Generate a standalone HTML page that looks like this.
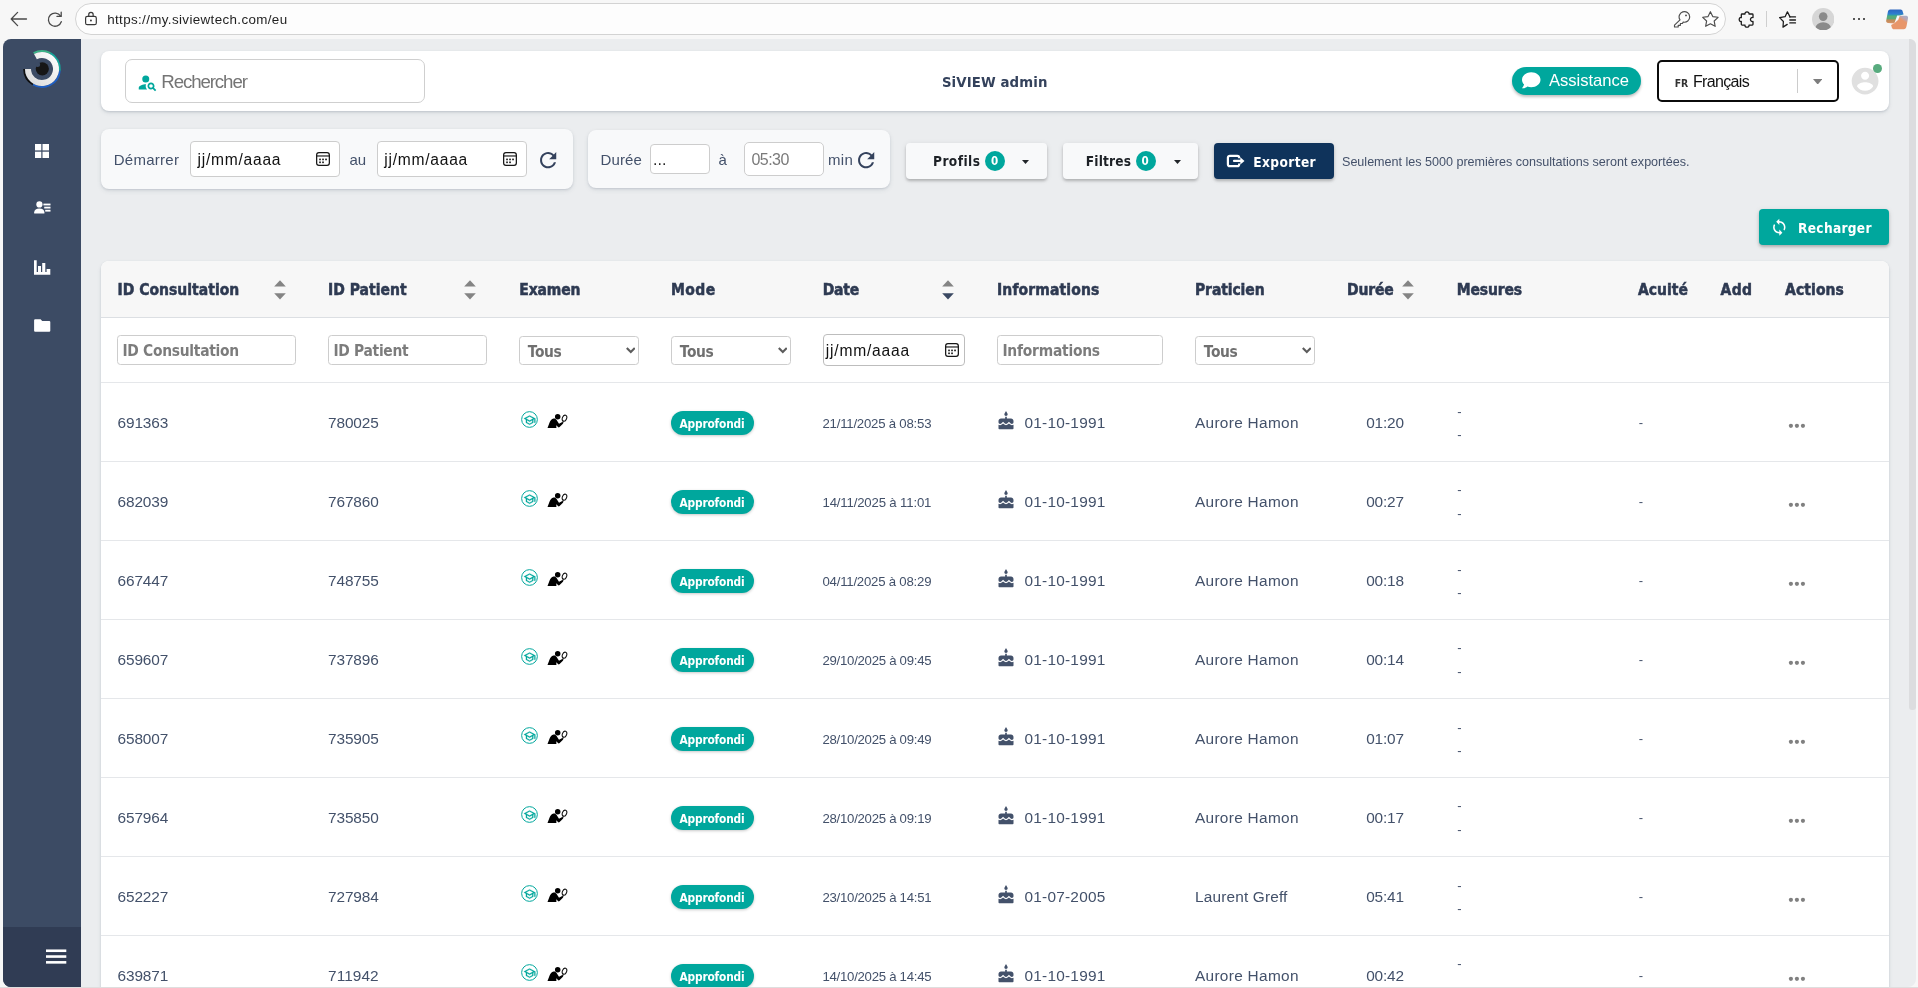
<!DOCTYPE html>
<html lang="fr"><head><meta charset="utf-8"><title>SiVIEW admin</title>
<style>
*{box-sizing:border-box}
html,body{margin:0;padding:0}
body{width:1918px;height:988px;overflow:hidden;background:#f7f7f7;font-family:"Liberation Sans",Arial,sans-serif;position:relative}
.a{position:absolute;display:block}
.t{position:absolute;white-space:pre;line-height:1;display:block}
#chrome{left:0;top:0;width:1918px;height:39px;background:#f7f7f7}
#addr{left:75px;top:3px;width:1651px;height:32px;border-radius:16px;background:#fdfdfd;border:1px solid #d3d3d3}
#vp{left:3px;top:39px;width:1913px;height:948px;border-radius:8px;background:#ebedef;overflow:hidden}
#side{left:3px;top:39px;width:78px;height:948px;background:#3c4b64;border-radius:8px 0 0 8px}
#sidemin{left:3px;top:927px;width:78px;height:60px;background:#303c54;border-radius:0 0 0 8px}
.card{background:#fff;border-radius:8px;box-shadow:0 1px 2px rgba(60,75,100,.18),0 2px 4px rgba(60,75,100,.10)}
.fcard{background:#f8f9fa;border-radius:8px;box-shadow:0 1px 2px rgba(60,75,100,.16),0 2px 5px rgba(60,75,100,.10)}
.inp{background:#fff;border:1px solid #cdcdcd;border-radius:4px}
.btn{border-radius:4px;box-shadow:0 2px 3px rgba(0,0,0,.22),0 1px 6px rgba(0,0,0,.08)}
.hl{height:1px;background:#e5e7ea}
.badge{background:#00a79d;border-radius:12px;box-shadow:0 1px 3px rgba(0,0,0,.22)}
.dot{width:4.2px;height:4.2px;border-radius:50%;background:#7f7f7f}
</style></head><body>
<div id="gl" class="a" style="left:0;top:0;width:1918px;height:988px;will-change:transform">
<div id="vp" class="a"></div><div id="side" class="a"></div><div id="sidemin" class="a"></div><div class="a" style="left:1909px;top:39px;width:6.5px;height:671px;background:#dcdddf;border-radius:0 6px 3px 3px"></div><div id="addr" class="a"></div><svg class="a" style="left:10px;top:11px" width="18" height="16" viewBox="0 0 18 16" ><path d="M1.2 8 H16.500 M7.600 1.400 L1.200 8 L7.600 14.600" fill="none" stroke="#4a4a4a" stroke-width="1.3" stroke-linecap="round" stroke-linejoin="round"/></svg><svg class="a" style="left:46px;top:10.5px" width="18" height="17" viewBox="0 0 18 17" ><path d="M14.6 5.1 A6.6 6.6 0 1 0 15.300 10.700" fill="none" stroke="#4a4a4a" stroke-width="1.3" stroke-linecap="round"/><path d="M15.200 1.200 V5.400 H11" fill="none" stroke="#4a4a4a" stroke-width="1.3" stroke-linecap="round" stroke-linejoin="round"/></svg><svg class="a" style="left:84px;top:10.5px" width="14" height="15" viewBox="0 0 14 15" ><rect x="1.600" y="5.300" width="10.700" height="8.400" rx="1.800" fill="none" stroke="#383838" stroke-width="1.200"/><path d="M4.750 5.200 V3.550 A2.200 2.200 0 0 1 9.150 3.550 V5.200" fill="none" stroke="#383838" stroke-width="1.200"/><circle cx="6.950" cy="9.500" r="0.950" fill="#383838"/></svg><span class="t" style="left:107.20px;top:13.00px;font-size:13.4px;font-weight:400;color:#1f1f1f;letter-spacing:0.362px;">https://my.siviewtech.com/eu</span><svg class="a" style="left:1673px;top:10.5px" width="18" height="17" viewBox="0 0 18 17" ><path d="M10.200 11.100 L9.400 12.500 H7.400 V14.300 H5.200 V16 H1.500 V14.200 L7 8.900 A5.300 5.300 0 1 1 10.200 11.100 Z" fill="none" stroke="#4d4d4d" stroke-width="1.150" stroke-linejoin="round"/><circle cx="13" cy="4.400" r="0.950" fill="#4d4d4d"/></svg><svg class="a" style="left:1701.5px;top:11px" width="17" height="17" viewBox="0 0 17 17" ><path d="M8.40 0.70 L10.75 5.56 L16.10 6.30 L12.20 10.04 L13.16 15.35 L8.40 12.80 L3.64 15.35 L4.60 10.04 L0.70 6.30 L6.05 5.56 Z" fill="none" stroke="#4d4d4d" stroke-width="1.150" stroke-linejoin="round"/></svg><svg class="a" style="left:1738px;top:10.5px" width="17" height="17" viewBox="0 0 17 17" ><path d="M3.300 3.800 Q3.300 3 4.100 3 H7 C6.400 0.200 11.600 0.200 11 3 H14.200 Q15 3 15 3.800 V6.500 C11.600 5.900 11.600 11.100 15 10.500 V13.300 Q15 14.100 14.200 14.100 H11 C11.600 16.900 6.400 16.900 7 14.100 H4.100 Q3.300 14.100 3.300 13.300 V10.500 C0.500 11.100 0.500 5.900 3.300 6.500 Z" fill="none" stroke="#1c1c1c" stroke-width="1.300" stroke-linejoin="round"/></svg><div class="a" style="left:1766px;top:11px;width:1px;height:16px;background:#cfcfcf"></div><svg class="a" style="left:1778.5px;top:10.5px" width="18" height="17" viewBox="0 0 18 17" ><path d="M11 5.900 L8.400 0.800 L6.100 5.700 L0.600 6.600 L4.400 10.500 L4 16.100 L8.200 13.400" fill="none" stroke="#1c1c1c" stroke-width="1.250" stroke-linejoin="round" stroke-linecap="round"/><path d="M10.800 5.900 H16.500 M10.800 9 H16.500 M10.800 11.900 H16.500" stroke="#1c1c1c" stroke-width="1.300" stroke-linecap="round"/></svg><svg class="a" style="left:1811.8px;top:7.8px" width="22.4" height="22.4" viewBox="0 0 22.400 22.400" ><defs><clipPath id="cpa"><circle cx="11.200" cy="11.200" r="11.200"/></clipPath></defs><circle cx="11.200" cy="11.200" r="11.200" fill="#d6d6d6"/><g clip-path="url(#cpa)"><circle cx="11.200" cy="8.600" r="4.300" fill="#8a8a8a"/><ellipse cx="11.200" cy="20.300" rx="7.800" ry="6" fill="#8a8a8a"/></g></svg><div class="a" style="left:1852.7px;top:17.600px;width:2.600px;height:2.600px;border-radius:50%;background:#222"></div><div class="a" style="left:1857.7px;top:17.600px;width:2.600px;height:2.600px;border-radius:50%;background:#222"></div><div class="a" style="left:1862.7px;top:17.600px;width:2.600px;height:2.600px;border-radius:50%;background:#222"></div><svg class="a" style="left:1886px;top:8.5px" width="22.5" height="21" viewBox="0 0 22.500 21" ><defs><linearGradient id="cg1" x1="0" y1="0" x2="0" y2="1"><stop offset="0" stop-color="#2c66c0"/><stop offset="0.330" stop-color="#2f7fd0"/><stop offset="0.400" stop-color="#2fa3a0"/><stop offset="0.500" stop-color="#57aa7c"/><stop offset="0.680" stop-color="#5aaa78"/><stop offset="0.740" stop-color="#c08a5a"/><stop offset="0.900" stop-color="#c99060"/><stop offset="1" stop-color="#e8956a"/></linearGradient><linearGradient id="cg2" x1="0.2" y1="1" x2="1" y2="0"><stop offset="0" stop-color="#e8966a"/><stop offset="0.620" stop-color="#e8966a"/><stop offset="0.780" stop-color="#b9a7b4"/><stop offset="1" stop-color="#a3b2d2"/></linearGradient></defs><path d="M4.200 0.600 H14.600 C15.800 0.600 16.300 1.300 16.700 2.400 L17.600 5.600 L13.500 6.500 L11.200 6.400 L8.300 14.400 L2 14 C0.600 13.900 -0.100 12.800 0.200 11.400 L1.800 3.200 C2.100 1.600 2.900 0.600 4.200 0.600 Z" fill="url(#cg1)"/><path d="M13.700 6.700 H20.200 C21.600 6.700 22.300 7.900 22 9.300 L20.500 17.200 C20.100 19.100 19.200 20.200 17.700 20.200 H8 C6.800 20.200 6.200 19.500 5.800 18.400 L5.100 16.100 L8.400 14.300 L12.300 10.800 Z" fill="url(#cg2)"/></svg><svg class="a" style="left:22px;top:49px" width="40" height="40" viewBox="0 0 40 40" ><defs><linearGradient id="lg" x1="0" y1="1" x2="1" y2="0"><stop offset="0" stop-color="#dcdcdc"/><stop offset="0.55" stop-color="#ececec"/><stop offset="1" stop-color="#ffffff"/></linearGradient></defs><path d="M2.100 20 A17.900 17.900 0 0 0 11 35.500" fill="none" stroke="#101010" stroke-width="1.900"/><path d="M11 35.500 A17.900 17.900 0 0 0 37.830 21.560" fill="none" stroke="#1f5fc4" stroke-width="1.900"/><path d="M37.830 21.560 A17.900 17.900 0 0 0 28.400 4.200" fill="none" stroke="#14a79c" stroke-width="1.900"/><path d="M28.400 4.200 A17.900 17.900 0 0 0 11.600 4.200" fill="none" stroke="#3db488" stroke-width="1.900"/><path d="M6 20 A14 14 0 1 0 13.430 7.640" fill="none" stroke="url(#lg)" stroke-width="6"/><circle cx="20.300" cy="19.800" r="6.600" fill="#161616"/><circle cx="15.600" cy="15.600" r="2.500" fill="#3c4b64"/></svg><svg class="a" style="left:35px;top:144px" width="14" height="14" viewBox="0 0 14 14" ><rect x="0" y="0" width="6.300" height="6.400" fill="#fff"/><rect x="7.500" y="0" width="6.500" height="6.400" fill="#fff"/><rect x="0" y="7.700" width="6.300" height="6.300" fill="#fff"/><rect x="7.500" y="7.700" width="6.500" height="6.300" fill="#fff"/></svg><svg class="a" style="left:33.8px;top:201.3px" width="17" height="13" viewBox="0 0 17 13" ><circle cx="5.400" cy="3.400" r="3.100" fill="#fff"/><path d="M0.200 12.600 V11.300 C0.200 8.600 2.400 7.400 5.400 7.400 C8.400 7.400 10.400 8.600 10.400 11.300 V12.600 Z" fill="#fff"/><rect x="9.400" y="2.600" width="7.100" height="1.800" fill="#fff"/><rect x="10.200" y="5.700" width="6.300" height="1.800" fill="#fff"/><rect x="11.200" y="8.800" width="5.300" height="1.800" fill="#fff"/></svg><svg class="a" style="left:34px;top:259.5px" width="16.5" height="15" viewBox="0 0 16.500 15" ><path d="M0 0.300 H2.700 V12 H0 Z M0 12 H16.300 V14.700 H0 Z M4 6 H7 V12 H4 Z M8.200 3 H11.300 V12 H8.200 Z M12.600 9 H16.300 V12 H12.600 Z" fill="#fff"/></svg><svg class="a" style="left:34px;top:318.6px" width="16.5" height="13" viewBox="0 0 16.500 13" ><path d="M1.200 0.200 H6.600 L8.200 1.900 H15.200 A1.100 1.100 0 0 1 16.300 3 V11.700 A1.100 1.100 0 0 1 15.200 12.800 H1.200 A1.100 1.100 0 0 1 0.100 11.700 V1.300 A1.100 1.100 0 0 1 1.200 0.200 Z" fill="#fff"/></svg><svg class="a" style="left:46px;top:949px" width="21" height="16" viewBox="0 0 21 16" ><rect x="0" y="0.450" width="20.300" height="2.600" fill="#fff"/><rect x="0" y="6.250" width="20.300" height="2.600" fill="#fff"/><rect x="0" y="12.050" width="20.300" height="2.600" fill="#fff"/></svg><div class="a card" style="left:101px;top:51px;width:1788px;height:60px"></div><div class="a inp" style="left:125px;top:59px;width:300px;height:44px;border-radius:7px;border-color:#cfcfcf"></div><svg class="a" style="left:136.6px;top:71.5px" width="21" height="21" viewBox="0 0 24 24" ><path d="M10 4a4 4 0 1 0 0 8 4 4 0 0 0 0-8zM10.35 14.01C7.62 13.91 2 15.27 2 18v2h9.54c-2.47-2.76-1.23-5.89-1.19-5.99zM19.43 18.02c.36-.59.57-1.28.57-2.02 0-2.21-1.79-4-4-4s-4 1.79-4 4 1.790 4 4 4c.74 0 1.43-.22 2.02-.57L20.59 22 22 20.59l-2.57-2.57zM16 18c-1.1 0-2-.9-2-2s.9-2 2-2 2 .9 2 2-.9 2-2 2z" fill="#00a79d"/></svg><span class="t" style="left:161.30px;top:73.00px;font-size:18.7px;font-weight:400;color:#757575;letter-spacing:-1.111px;">Rechercher</span><span class="t" style="left:941.90px;top:75.00px;font-size:14.8px;font-weight:700;color:#34425c;font-family:'DejaVu Sans Condensed','DejaVu Sans',sans-serif;letter-spacing:0.112px;">SiVIEW admin</span><div class="a" style="left:1512px;top:67px;width:128.5px;height:27.5px;border-radius:14px;background:#00a79d;box-shadow:0 2px 3px rgba(0,0,0,.25)"></div><svg class="a" style="left:1522px;top:70.5px" width="18.5" height="18.5" viewBox="0 0 512 512" ><path d="M256 32C114.6 32 0 125.1 0 240c0 49.6 21.4 95 57 130.7C44.5 421.1 2.7 466 2.2 466.500c-2.2 2.3-2.8 5.7-1.5 8.7S4.8 480 8 480c66.3 0 116-31.8 140.6-51.4 32.7 12.3 69 19.4 107.4 19.4 141.4 0 256-93.1 256-208S397.4 32 256 32z" fill="#fff"/></svg><span class="t" style="left:1549.00px;top:73.00px;font-size:16.6px;font-weight:400;color:#fff;letter-spacing:-0.025px;">Assistance</span><div class="a" style="left:1657px;top:60px;width:182px;height:42px;border:2px solid #0b0b0b;border-radius:5px;background:#fff"></div><span class="t" style="left:1674.70px;top:78.00px;font-size:10.4px;font-weight:700;color:#333;font-family:'DejaVu Sans Condensed','DejaVu Sans',sans-serif;letter-spacing:-0.097px;">FR</span><span class="t" style="left:1693.00px;top:74.00px;font-size:16px;font-weight:400;color:#111;letter-spacing:-0.670px;">Français</span><div class="a" style="left:1797px;top:69px;width:1px;height:24px;background:#cccccc"></div><svg class="a" style="left:1812.8px;top:78.8px" width="9.4" height="5.6" viewBox="0 0 9.4 5.6" ><path d="M0 0 L9.4 0 L4.7 5.6 Z" fill="#7d7d7d"/></svg><svg class="a" style="left:1849px;top:64.8px" width="32.2" height="32.2" viewBox="0 0 24 24" ><path d="M12 2C6.48 2 2 6.48 2 12s4.48 10 10 10 10-4.48 10-10S17.52 2 12 2zm0 3c1.66 0 3 1.34 3 3s-1.34 3-3 3-3-1.34-3-3 1.34-3 3-3zm0 14.2c-2.5 0-4.71-1.28-6-3.22.03-1.99 4-3.08 6-3.08 1.990 0 5.97 1.09 6 3.08-1.29 1.94-3.5 3.22-6 3.220z" fill="#e0e0e0"/></svg><div class="a" style="left:1872.800px;top:64px;width:9.200px;height:9.200px;border-radius:50%;background:#58ab7e"></div><div class="a fcard" style="left:101px;top:129px;width:472px;height:60px"></div><span class="t" style="left:113.75px;top:152.00px;font-size:15px;font-weight:400;color:#43516a;letter-spacing:0.270px;">Démarrer</span><div class="a inp" style="left:190px;top:141px;width:150px;height:36px"></div><span class="t" style="left:197.50px;top:152.00px;font-size:15.6px;font-weight:400;color:#111;letter-spacing:0.748px;">jj/mm/aaaa</span><svg class="a" style="left:315.75px;top:151.75px" width="14" height="14" viewBox="0 0 14 14" ><rect x="0.650" y="0.650" width="12.700" height="12.700" rx="2.300" fill="none" stroke="#161616" stroke-width="1.250"/><rect x="0.650" y="3.400" width="12.700" height="1.150" fill="#161616"/><rect x="3.200" y="6.600" width="1.650" height="1.650" fill="#161616"/><rect x="6.200" y="6.600" width="1.650" height="1.650" fill="#161616"/><rect x="9.200" y="6.600" width="1.650" height="1.650" fill="#161616"/><rect x="3.200" y="9.500" width="1.650" height="1.650" fill="#161616"/><rect x="6.200" y="9.500" width="1.650" height="1.650" fill="#161616"/></svg><span class="t" style="left:349.50px;top:152.00px;font-size:15px;font-weight:400;color:#43516a;letter-spacing:-0.094px;">au</span><div class="a inp" style="left:377px;top:141px;width:150px;height:36px"></div><span class="t" style="left:384.30px;top:152.00px;font-size:15.6px;font-weight:400;color:#111;letter-spacing:0.748px;">jj/mm/aaaa</span><svg class="a" style="left:502.6px;top:151.75px" width="14" height="14" viewBox="0 0 14 14" ><rect x="0.650" y="0.650" width="12.700" height="12.700" rx="2.300" fill="none" stroke="#161616" stroke-width="1.250"/><rect x="0.650" y="3.400" width="12.700" height="1.150" fill="#161616"/><rect x="3.200" y="6.600" width="1.650" height="1.650" fill="#161616"/><rect x="6.200" y="6.600" width="1.650" height="1.650" fill="#161616"/><rect x="9.200" y="6.600" width="1.650" height="1.650" fill="#161616"/><rect x="3.200" y="9.500" width="1.650" height="1.650" fill="#161616"/><rect x="6.200" y="9.500" width="1.650" height="1.650" fill="#161616"/></svg><svg class="a" style="left:536.4px;top:147.6px" width="24.3" height="24.3" viewBox="0 0 24 24" ><path d="M17.65 6.35C16.2 4.9 14.21 4 12 4c-4.42 0-7.99 3.58-7.99 8s3.57 8 7.99 8c3.73 0 6.84-2.55 7.730-6h-2.080c-.82 2.33-3.040 4-5.650 4-3.310 0-6-2.690-6-6s2.690-6 6-6c1.660 0 3.140.69 4.220 1.780L13 11h7V4l-2.350 2.350z" fill="#34425c"/></svg><div class="a fcard" style="left:588px;top:130px;width:302px;height:58px"></div><span class="t" style="left:600.50px;top:152.00px;font-size:15px;font-weight:400;color:#43516a;letter-spacing:0.128px;">Durée</span><div class="a inp" style="left:650px;top:144px;width:60px;height:30px"></div><span class="t" style="left:653.00px;top:152.00px;font-size:16px;font-weight:400;color:#222;">...</span><span class="t" style="left:718.50px;top:152.00px;font-size:15px;font-weight:400;color:#43516a;">à</span><div class="a inp" style="left:744px;top:142px;width:80px;height:34px;border-radius:5px"></div><span class="t" style="left:751.50px;top:152.00px;font-size:16px;font-weight:400;color:#7a7a7a;letter-spacing:-0.559px;">05:30</span><span class="t" style="left:828.00px;top:152.00px;font-size:15px;font-weight:400;color:#43516a;letter-spacing:0.359px;">min</span><svg class="a" style="left:854.2px;top:147.9px" width="24.3" height="24.3" viewBox="0 0 24 24" ><path d="M17.65 6.35C16.2 4.9 14.21 4 12 4c-4.42 0-7.99 3.58-7.99 8s3.57 8 7.99 8c3.73 0 6.84-2.55 7.730-6h-2.080c-.82 2.33-3.040 4-5.650 4-3.310 0-6-2.690-6-6s2.690-6 6-6c1.660 0 3.140.69 4.220 1.780L13 11h7V4l-2.350 2.350z" fill="#34425c"/></svg><div class="a btn" style="left:906px;top:143px;width:141px;height:36px;background:#f8f9fa"></div><span class="t" style="left:933.00px;top:155.00px;font-size:13.6px;font-weight:700;color:#1d2126;font-family:'DejaVu Sans Condensed','DejaVu Sans',sans-serif;letter-spacing:0.438px;">Profils</span><div class="a" style="left:985px;top:151px;width:20px;height:20px;border-radius:50%;background:#00a79d"></div><span class="t" style="left:991.10px;top:156.00px;font-size:11.5px;font-weight:700;color:#fff;font-family:'DejaVu Sans Condensed','DejaVu Sans',sans-serif;">0</span><svg class="a" style="left:1022.3px;top:159.5px" width="7" height="4" viewBox="0 0 7 4" ><path d="M0 0 L7 0 L3.5 4 Z" fill="#212529"/></svg><div class="a btn" style="left:1063px;top:143px;width:135px;height:36px;background:#f8f9fa"></div><span class="t" style="left:1085.75px;top:155.00px;font-size:13.6px;font-weight:700;color:#1d2126;font-family:'DejaVu Sans Condensed','DejaVu Sans',sans-serif;letter-spacing:0.185px;">Filtres</span><div class="a" style="left:1135.500px;top:151px;width:20px;height:20px;border-radius:50%;background:#00a79d"></div><span class="t" style="left:1141.60px;top:156.00px;font-size:11.5px;font-weight:700;color:#fff;font-family:'DejaVu Sans Condensed','DejaVu Sans',sans-serif;">0</span><svg class="a" style="left:1173.75px;top:159.5px" width="7" height="4" viewBox="0 0 7 4" ><path d="M0 0 L7 0 L3.5 4 Z" fill="#212529"/></svg><div class="a btn" style="left:1214px;top:143px;width:120px;height:36px;background:#0f335b"></div><svg class="a" style="left:1225.5px;top:154.3px" width="19" height="14" viewBox="0 0 19 14" ><path d="M13.2 4.3 V3.8 A2 2 0 0 0 11.2 1.800 H3.900 A2 2 0 0 0 1.900 3.800 V10.200 A2 2 0 0 0 3.900 12.200 H11.200 A2 2 0 0 0 13.200 10.200 V9.600" fill="none" stroke="#fff" stroke-width="2.200"/><path d="M8 6.950 H15" stroke="#fff" stroke-width="2.200" stroke-linecap="round"/><path d="M14.300 3.300 L18.500 6.950 L14.300 10.600 Z" fill="#fff"/></svg><span class="t" style="left:1253.25px;top:156.00px;font-size:13.6px;font-weight:700;color:#fff;font-family:'DejaVu Sans Condensed','DejaVu Sans',sans-serif;letter-spacing:0.391px;">Exporter</span><span class="t" style="left:1342.00px;top:156.00px;font-size:12.6px;font-weight:400;color:#44516a;letter-spacing:-0.019px;">Seulement les 5000 premières consultations seront exportées.</span><div class="a btn" style="left:1759px;top:209px;width:130px;height:36px;background:#00a79d"></div><svg class="a" style="left:1770.1px;top:218px" width="18.6" height="18.6" viewBox="0 0 24 24" ><path d="M12 4V1L8 5l4 4V6c3.31 0 6 2.69 6 6 0 1.01-.25 1.97-.7 2.8l1.46 1.46C19.54 15.03 20 13.57 20 12c0-4.42-3.58-8-8-8zm0 14c-3.31 0-6-2.69-6-6 0-1.010.25-1.97.7-2.8L5.24 7.74C4.46 8.97 4 10.43 4 12c0 4.42 3.58 8 8 8v3l4-4-4-4v3z" fill="#fff"/></svg><span class="t" style="left:1798.00px;top:222.00px;font-size:13.6px;font-weight:700;color:#fff;font-family:'DejaVu Sans Condensed','DejaVu Sans',sans-serif;letter-spacing:0.306px;">Recharger</span><div class="a card" style="left:101px;top:261px;width:1788px;height:760px;overflow:hidden"><div class="a" style="left:0;top:0;width:1788px;height:56.500px;background:#f7f7f7"></div></div><div class="a hl" style="left:101px;top:317px;width:1788px;background:#dcdfe3"></div><div class="a hl" style="left:101px;top:382px;width:1788px"></div><span class="t" style="left:117.50px;top:283.00px;font-size:15.5px;font-weight:700;color:#2e3a52;font-family:'DejaVu Sans Condensed','DejaVu Sans',sans-serif;letter-spacing:0.023px;-webkit-text-stroke:0.5px #2e3a52;">ID Consultation</span><span class="t" style="left:328.00px;top:283.00px;font-size:15.5px;font-weight:700;color:#2e3a52;font-family:'DejaVu Sans Condensed','DejaVu Sans',sans-serif;letter-spacing:0.042px;-webkit-text-stroke:0.5px #2e3a52;">ID Patient</span><span class="t" style="left:519.25px;top:283.00px;font-size:15.5px;font-weight:700;color:#2e3a52;font-family:'DejaVu Sans Condensed','DejaVu Sans',sans-serif;letter-spacing:-0.143px;-webkit-text-stroke:0.5px #2e3a52;">Examen</span><span class="t" style="left:671.00px;top:283.00px;font-size:15.5px;font-weight:700;color:#2e3a52;font-family:'DejaVu Sans Condensed','DejaVu Sans',sans-serif;letter-spacing:0.398px;-webkit-text-stroke:0.5px #2e3a52;">Mode</span><span class="t" style="left:822.75px;top:283.00px;font-size:15.5px;font-weight:700;color:#2e3a52;font-family:'DejaVu Sans Condensed','DejaVu Sans',sans-serif;letter-spacing:-0.219px;-webkit-text-stroke:0.5px #2e3a52;">Date</span><span class="t" style="left:997.00px;top:283.00px;font-size:15.5px;font-weight:700;color:#2e3a52;font-family:'DejaVu Sans Condensed','DejaVu Sans',sans-serif;letter-spacing:0.138px;-webkit-text-stroke:0.5px #2e3a52;">Informations</span><span class="t" style="left:1195.00px;top:283.00px;font-size:15.5px;font-weight:700;color:#2e3a52;font-family:'DejaVu Sans Condensed','DejaVu Sans',sans-serif;letter-spacing:-0.099px;-webkit-text-stroke:0.5px #2e3a52;">Praticien</span><span class="t" style="left:1347.00px;top:283.00px;font-size:15.5px;font-weight:700;color:#2e3a52;font-family:'DejaVu Sans Condensed','DejaVu Sans',sans-serif;letter-spacing:-0.163px;-webkit-text-stroke:0.5px #2e3a52;">Durée</span><span class="t" style="left:1456.75px;top:283.00px;font-size:15.5px;font-weight:700;color:#2e3a52;font-family:'DejaVu Sans Condensed','DejaVu Sans',sans-serif;letter-spacing:-0.138px;-webkit-text-stroke:0.5px #2e3a52;">Mesures</span><span class="t" style="left:1638.00px;top:283.00px;font-size:15.5px;font-weight:700;color:#2e3a52;font-family:'DejaVu Sans Condensed','DejaVu Sans',sans-serif;letter-spacing:0.018px;-webkit-text-stroke:0.5px #2e3a52;">Acuité</span><span class="t" style="left:1720.50px;top:283.00px;font-size:15.5px;font-weight:700;color:#2e3a52;font-family:'DejaVu Sans Condensed','DejaVu Sans',sans-serif;letter-spacing:0.411px;-webkit-text-stroke:0.5px #2e3a52;">Add</span><span class="t" style="left:1785.00px;top:283.00px;font-size:15.5px;font-weight:700;color:#2e3a52;font-family:'DejaVu Sans Condensed','DejaVu Sans',sans-serif;letter-spacing:0.096px;-webkit-text-stroke:0.5px #2e3a52;">Actions</span><svg class="a" style="left:274px;top:279.5px" width="12" height="21" viewBox="0 0 12 21"><path d="M0.2 6.600 L6 0.200 L11.800 6.600 Z" fill="#848484"/><path d="M0.200 13.300 L6 19.600 L11.800 13.300 Z" fill="#848484"/></svg><svg class="a" style="left:464px;top:279.5px" width="12" height="21" viewBox="0 0 12 21"><path d="M0.2 6.600 L6 0.200 L11.800 6.600 Z" fill="#848484"/><path d="M0.200 13.300 L6 19.600 L11.800 13.300 Z" fill="#848484"/></svg><svg class="a" style="left:942.4px;top:279.5px" width="12" height="21" viewBox="0 0 12 21"><path d="M0.2 6.600 L6 0.200 L11.800 6.600 Z" fill="#848484"/><path d="M0.200 13.300 L6 19.600 L11.800 13.300 Z" fill="#3a4862"/></svg><svg class="a" style="left:1401.6px;top:279.5px" width="12" height="21" viewBox="0 0 12 21"><path d="M0.2 6.600 L6 0.200 L11.800 6.600 Z" fill="#848484"/><path d="M0.200 13.300 L6 19.600 L11.800 13.300 Z" fill="#848484"/></svg><div class="a inp" style="left:117px;top:335px;width:179px;height:30px;border-color:#cdcdcd;border-radius:3.5px"></div><span class="t" style="left:122.40px;top:344.00px;font-size:15.4px;font-weight:700;color:#7c7c7c;font-family:'DejaVu Sans Condensed','DejaVu Sans',sans-serif;letter-spacing:-0.270px;">ID Consultation</span><div class="a inp" style="left:328px;top:335px;width:159px;height:30px;border-color:#cdcdcd;border-radius:3.5px"></div><span class="t" style="left:333.40px;top:344.00px;font-size:15.4px;font-weight:700;color:#7c7c7c;font-family:'DejaVu Sans Condensed','DejaVu Sans',sans-serif;letter-spacing:-0.278px;">ID Patient</span><div class="a inp" style="left:519px;top:336px;width:120px;height:29px;border-color:#cdcdcd;border-radius:3.5px"></div><span class="t" style="left:527.80px;top:345.00px;font-size:15.4px;font-weight:700;color:#707070;font-family:'DejaVu Sans Condensed','DejaVu Sans',sans-serif;letter-spacing:-0.320px;">Tous</span><svg class="a" style="left:625.5999999999999px;top:346.6px" width="9.6" height="7" viewBox="0 0 9.6 7" ><path d="M0.800 1 L4.800 5.100 L8.800 1" fill="none" stroke="#5c5c5c" stroke-width="2.100"/></svg><div class="a inp" style="left:671px;top:336px;width:120px;height:29px;border-color:#cdcdcd;border-radius:3.5px"></div><span class="t" style="left:679.80px;top:345.00px;font-size:15.4px;font-weight:700;color:#707070;font-family:'DejaVu Sans Condensed','DejaVu Sans',sans-serif;letter-spacing:-0.320px;">Tous</span><svg class="a" style="left:777.5999999999999px;top:346.6px" width="9.6" height="7" viewBox="0 0 9.6 7" ><path d="M0.800 1 L4.800 5.100 L8.800 1" fill="none" stroke="#5c5c5c" stroke-width="2.100"/></svg><div class="a inp" style="left:823px;top:334px;width:142px;height:32px;border-color:#bdbdbd"></div><span class="t" style="left:825.75px;top:343.00px;font-size:15.6px;font-weight:400;color:#111;letter-spacing:0.798px;">jj/mm/aaaa</span><svg class="a" style="left:944.5px;top:343px" width="14" height="14" viewBox="0 0 14 14" ><rect x="0.650" y="0.650" width="12.700" height="12.700" rx="2.300" fill="none" stroke="#161616" stroke-width="1.250"/><rect x="0.650" y="3.400" width="12.700" height="1.150" fill="#161616"/><rect x="3.200" y="6.600" width="1.650" height="1.650" fill="#161616"/><rect x="6.200" y="6.600" width="1.650" height="1.650" fill="#161616"/><rect x="9.200" y="6.600" width="1.650" height="1.650" fill="#161616"/><rect x="3.200" y="9.500" width="1.650" height="1.650" fill="#161616"/><rect x="6.200" y="9.500" width="1.650" height="1.650" fill="#161616"/></svg><div class="a inp" style="left:997px;top:335px;width:166px;height:30px;border-color:#cdcdcd;border-radius:3.5px"></div><span class="t" style="left:1002.40px;top:344.00px;font-size:15.4px;font-weight:700;color:#7c7c7c;font-family:'DejaVu Sans Condensed','DejaVu Sans',sans-serif;letter-spacing:-0.219px;">Informations</span><div class="a inp" style="left:1195px;top:336px;width:120px;height:29px;border-color:#cdcdcd;border-radius:3.5px"></div><span class="t" style="left:1203.80px;top:345.00px;font-size:15.4px;font-weight:700;color:#707070;font-family:'DejaVu Sans Condensed','DejaVu Sans',sans-serif;letter-spacing:-0.320px;">Tous</span><svg class="a" style="left:1301.6px;top:346.6px" width="9.6" height="7" viewBox="0 0 9.6 7" ><path d="M0.800 1 L4.800 5.100 L8.800 1" fill="none" stroke="#5c5c5c" stroke-width="2.100"/></svg><span class="t" style="left:117.50px;top:415.00px;font-size:15.4px;font-weight:400;color:#43516a;letter-spacing:-0.102px;">691363</span><span class="t" style="left:328.00px;top:415.00px;font-size:15.4px;font-weight:400;color:#43516a;letter-spacing:-0.102px;">780025</span><svg class="a" style="left:520.7px;top:410.5px" width="17" height="17" viewBox="0 0 34 34" ><circle cx="17" cy="17" r="15.700" fill="none" stroke="#00a79d" stroke-width="2"/><g transform="translate(4.600,5.600) scale(1.05)"><path d="M12 3L1 9l4 2.180v6L12 21l7-3.820v-6l2-1.090V17h2V9L12 3zm6.820 6L12 12.720 5.180 9 12 5.280 18.820 9zM17 15.990l-5 2.730-5-2.730v-3.720L12 15l5-2.730v3.720z" fill="#00a79d" stroke="#00a79d" stroke-width="0.450"/></g></svg><svg class="a" style="left:546.5px;top:413.2px" width="21" height="15.5" viewBox="0 0 21 15.5" ><circle cx="10.7" cy="3.7" r="2.75" fill="#000"/><path d="M0.5 14.9 L2.2 10.5 C3.2 7.8 4.6 5.9 6.6 5.6 C8 5.4 8.9 6 9.6 7.1 L12 10.7 L15.3 9 L16.2 10.5 L12.6 14.1 C12 14.6 11.400 14.5 11 14.1 L9.3 12.3 L9.4 14.9 Z" fill="#000"/><ellipse cx="17.5" cy="5.2" rx="2.1" ry="3.1" transform="rotate(22 17.5 5.2)" fill="#fff" stroke="#111" stroke-width="1.1"/><path d="M16.3 8.2 L15.4 10.2" stroke="#111" stroke-width="1.2"/></svg><div class="a badge" style="left:671px;top:411px;width:82.500px;height:23.500px"></div><span class="t" style="left:679.50px;top:419.00px;font-size:11.8px;font-weight:700;color:#fff;font-family:'DejaVu Sans Condensed','DejaVu Sans',sans-serif;letter-spacing:-0.164px;">Approfondi</span><span class="t" style="left:822.50px;top:417.00px;font-size:13.2px;font-weight:400;color:#43516a;letter-spacing:-0.219px;">21/11/2025 à 08:53</span><svg class="a" style="left:996.3px;top:411.2px" width="20" height="20" viewBox="0 0 24 24" ><path d="M12 6c1.11 0 2-.9 2-2 0-.38-.1-.73-.29-1.030L12 0l-1.710 2.970c-.19.3-.29.65-.29 1.030 0 1.1.9 2 2 2zm4.600 9.990l-1.070-1.070-1.080 1.070c-1.300 1.300-3.580 1.310-4.890 0l-1.070-1.070-1.090 1.070C6.750 16.640 5.880 17 4.960 17c-.73 0-1.400-.23-1.960-.61V21c0 .55.45 1 1 1h16c.55 0 1-.45 1-1v-4.610c-.56.38-1.230.61-1.960.61-.92 0-1.790-.36-2.440-1.010zM18 9h-5V7h-2v2H6c-1.660 0-3 1.340-3 3v1.540c0 1.080.88 1.960 1.960 1.960.52 0 1.020-.2 1.380-.57l2.140-2.130 2.130 2.130c.74.74 2.030.74 2.770 0l2.140-2.130 2.130 2.130c.37.37.86.57 1.380.57 1.080 0 1.960-.88 1.960-1.960V12C21 10.340 19.660 9 18 9z" fill="#43516a"/></svg><span class="t" style="left:1024.50px;top:415.00px;font-size:15.4px;font-weight:400;color:#43516a;letter-spacing:0.227px;">01-10-1991</span><span class="t" style="left:1195.00px;top:415.00px;font-size:15.4px;font-weight:400;color:#43516a;letter-spacing:0.305px;">Aurore Hamon</span><span class="t" style="left:1366.25px;top:415.00px;font-size:15.4px;font-weight:400;color:#43516a;letter-spacing:-0.203px;">01:20</span><span class="t" style="left:1457.25px;top:405.00px;font-size:13px;font-weight:400;color:#43516a;">-</span><span class="t" style="left:1457.25px;top:428.00px;font-size:13px;font-weight:400;color:#43516a;">-</span><span class="t" style="left:1638.75px;top:416.00px;font-size:13px;font-weight:400;color:#43516a;">-</span><svg class="a" style="left:1788px;top:423px" width="18" height="6" viewBox="0 0 18 6" ><circle cx="2.9" cy="2.85" r="2.1" fill="#808080"/><circle cx="8.9" cy="2.85" r="2.1" fill="#808080"/><circle cx="14.95" cy="2.85" r="2.1" fill="#808080"/></svg><div class="a hl" style="left:101px;top:461px;width:1788px"></div><span class="t" style="left:117.50px;top:494.00px;font-size:15.4px;font-weight:400;color:#43516a;letter-spacing:-0.102px;">682039</span><span class="t" style="left:328.00px;top:494.00px;font-size:15.4px;font-weight:400;color:#43516a;letter-spacing:-0.102px;">767860</span><svg class="a" style="left:520.7px;top:489.5px" width="17" height="17" viewBox="0 0 34 34" ><circle cx="17" cy="17" r="15.700" fill="none" stroke="#00a79d" stroke-width="2"/><g transform="translate(4.600,5.600) scale(1.05)"><path d="M12 3L1 9l4 2.180v6L12 21l7-3.820v-6l2-1.090V17h2V9L12 3zm6.820 6L12 12.720 5.180 9 12 5.280 18.820 9zM17 15.990l-5 2.730-5-2.730v-3.720L12 15l5-2.730v3.720z" fill="#00a79d" stroke="#00a79d" stroke-width="0.450"/></g></svg><svg class="a" style="left:546.5px;top:492.2px" width="21" height="15.5" viewBox="0 0 21 15.5" ><circle cx="10.7" cy="3.7" r="2.75" fill="#000"/><path d="M0.5 14.9 L2.2 10.5 C3.2 7.8 4.6 5.9 6.6 5.6 C8 5.4 8.9 6 9.6 7.1 L12 10.7 L15.3 9 L16.2 10.5 L12.6 14.1 C12 14.6 11.400 14.5 11 14.1 L9.3 12.3 L9.4 14.9 Z" fill="#000"/><ellipse cx="17.5" cy="5.2" rx="2.1" ry="3.1" transform="rotate(22 17.5 5.2)" fill="#fff" stroke="#111" stroke-width="1.1"/><path d="M16.3 8.2 L15.4 10.2" stroke="#111" stroke-width="1.2"/></svg><div class="a badge" style="left:671px;top:490px;width:82.500px;height:23.500px"></div><span class="t" style="left:679.50px;top:498.00px;font-size:11.8px;font-weight:700;color:#fff;font-family:'DejaVu Sans Condensed','DejaVu Sans',sans-serif;letter-spacing:-0.164px;">Approfondi</span><span class="t" style="left:822.50px;top:496.00px;font-size:13.2px;font-weight:400;color:#43516a;letter-spacing:-0.165px;">14/11/2025 à 11:01</span><svg class="a" style="left:996.3px;top:490.2px" width="20" height="20" viewBox="0 0 24 24" ><path d="M12 6c1.11 0 2-.9 2-2 0-.38-.1-.73-.29-1.030L12 0l-1.710 2.970c-.19.3-.29.65-.29 1.030 0 1.1.9 2 2 2zm4.600 9.990l-1.070-1.070-1.080 1.070c-1.300 1.300-3.580 1.310-4.890 0l-1.070-1.070-1.090 1.070C6.750 16.640 5.880 17 4.960 17c-.73 0-1.400-.23-1.960-.61V21c0 .55.45 1 1 1h16c.55 0 1-.45 1-1v-4.610c-.56.38-1.230.61-1.960.61-.92 0-1.790-.36-2.440-1.010zM18 9h-5V7h-2v2H6c-1.660 0-3 1.340-3 3v1.540c0 1.080.88 1.960 1.960 1.960.52 0 1.020-.2 1.380-.57l2.140-2.130 2.130 2.130c.74.74 2.030.74 2.770 0l2.140-2.130 2.130 2.130c.37.37.86.57 1.380.57 1.080 0 1.960-.88 1.960-1.960V12C21 10.340 19.660 9 18 9z" fill="#43516a"/></svg><span class="t" style="left:1024.50px;top:494.00px;font-size:15.4px;font-weight:400;color:#43516a;letter-spacing:0.227px;">01-10-1991</span><span class="t" style="left:1195.00px;top:494.00px;font-size:15.4px;font-weight:400;color:#43516a;letter-spacing:0.305px;">Aurore Hamon</span><span class="t" style="left:1366.25px;top:494.00px;font-size:15.4px;font-weight:400;color:#43516a;letter-spacing:-0.203px;">00:27</span><span class="t" style="left:1457.25px;top:483.00px;font-size:13px;font-weight:400;color:#43516a;">-</span><span class="t" style="left:1457.25px;top:507.00px;font-size:13px;font-weight:400;color:#43516a;">-</span><span class="t" style="left:1638.75px;top:495.00px;font-size:13px;font-weight:400;color:#43516a;">-</span><svg class="a" style="left:1788px;top:502px" width="18" height="6" viewBox="0 0 18 6" ><circle cx="2.9" cy="2.85" r="2.1" fill="#808080"/><circle cx="8.9" cy="2.85" r="2.1" fill="#808080"/><circle cx="14.95" cy="2.85" r="2.1" fill="#808080"/></svg><div class="a hl" style="left:101px;top:540px;width:1788px"></div><span class="t" style="left:117.50px;top:573.00px;font-size:15.4px;font-weight:400;color:#43516a;letter-spacing:-0.102px;">667447</span><span class="t" style="left:328.00px;top:573.00px;font-size:15.4px;font-weight:400;color:#43516a;letter-spacing:-0.102px;">748755</span><svg class="a" style="left:520.7px;top:568.5px" width="17" height="17" viewBox="0 0 34 34" ><circle cx="17" cy="17" r="15.700" fill="none" stroke="#00a79d" stroke-width="2"/><g transform="translate(4.600,5.600) scale(1.05)"><path d="M12 3L1 9l4 2.180v6L12 21l7-3.820v-6l2-1.090V17h2V9L12 3zm6.820 6L12 12.720 5.180 9 12 5.280 18.820 9zM17 15.990l-5 2.730-5-2.730v-3.720L12 15l5-2.730v3.720z" fill="#00a79d" stroke="#00a79d" stroke-width="0.450"/></g></svg><svg class="a" style="left:546.5px;top:571.2px" width="21" height="15.5" viewBox="0 0 21 15.5" ><circle cx="10.7" cy="3.7" r="2.75" fill="#000"/><path d="M0.5 14.9 L2.2 10.5 C3.2 7.8 4.6 5.9 6.6 5.6 C8 5.4 8.9 6 9.6 7.1 L12 10.7 L15.3 9 L16.2 10.5 L12.6 14.1 C12 14.6 11.400 14.5 11 14.1 L9.3 12.3 L9.4 14.9 Z" fill="#000"/><ellipse cx="17.5" cy="5.2" rx="2.1" ry="3.1" transform="rotate(22 17.5 5.2)" fill="#fff" stroke="#111" stroke-width="1.1"/><path d="M16.3 8.2 L15.4 10.2" stroke="#111" stroke-width="1.2"/></svg><div class="a badge" style="left:671px;top:569px;width:82.500px;height:23.500px"></div><span class="t" style="left:679.50px;top:577.00px;font-size:11.8px;font-weight:700;color:#fff;font-family:'DejaVu Sans Condensed','DejaVu Sans',sans-serif;letter-spacing:-0.164px;">Approfondi</span><span class="t" style="left:822.50px;top:575.00px;font-size:13.2px;font-weight:400;color:#43516a;letter-spacing:-0.219px;">04/11/2025 à 08:29</span><svg class="a" style="left:996.3px;top:569.2px" width="20" height="20" viewBox="0 0 24 24" ><path d="M12 6c1.11 0 2-.9 2-2 0-.38-.1-.73-.29-1.030L12 0l-1.710 2.970c-.19.3-.29.65-.29 1.030 0 1.1.9 2 2 2zm4.600 9.990l-1.070-1.070-1.080 1.070c-1.300 1.300-3.580 1.310-4.890 0l-1.070-1.070-1.090 1.070C6.750 16.640 5.880 17 4.960 17c-.73 0-1.400-.23-1.960-.61V21c0 .55.45 1 1 1h16c.55 0 1-.45 1-1v-4.610c-.56.38-1.230.61-1.960.61-.92 0-1.790-.36-2.440-1.010zM18 9h-5V7h-2v2H6c-1.660 0-3 1.340-3 3v1.540c0 1.080.88 1.960 1.960 1.960.52 0 1.020-.2 1.380-.57l2.140-2.130 2.130 2.130c.74.74 2.030.74 2.770 0l2.140-2.130 2.130 2.130c.37.37.86.57 1.380.57 1.080 0 1.960-.88 1.960-1.960V12C21 10.340 19.660 9 18 9z" fill="#43516a"/></svg><span class="t" style="left:1024.50px;top:573.00px;font-size:15.4px;font-weight:400;color:#43516a;letter-spacing:0.227px;">01-10-1991</span><span class="t" style="left:1195.00px;top:573.00px;font-size:15.4px;font-weight:400;color:#43516a;letter-spacing:0.305px;">Aurore Hamon</span><span class="t" style="left:1366.25px;top:573.00px;font-size:15.4px;font-weight:400;color:#43516a;letter-spacing:-0.203px;">00:18</span><span class="t" style="left:1457.25px;top:563.00px;font-size:13px;font-weight:400;color:#43516a;">-</span><span class="t" style="left:1457.25px;top:586.00px;font-size:13px;font-weight:400;color:#43516a;">-</span><span class="t" style="left:1638.75px;top:574.00px;font-size:13px;font-weight:400;color:#43516a;">-</span><svg class="a" style="left:1788px;top:581px" width="18" height="6" viewBox="0 0 18 6" ><circle cx="2.9" cy="2.85" r="2.1" fill="#808080"/><circle cx="8.9" cy="2.85" r="2.1" fill="#808080"/><circle cx="14.95" cy="2.85" r="2.1" fill="#808080"/></svg><div class="a hl" style="left:101px;top:619px;width:1788px"></div><span class="t" style="left:117.50px;top:652.00px;font-size:15.4px;font-weight:400;color:#43516a;letter-spacing:-0.102px;">659607</span><span class="t" style="left:328.00px;top:652.00px;font-size:15.4px;font-weight:400;color:#43516a;letter-spacing:-0.102px;">737896</span><svg class="a" style="left:520.7px;top:647.5px" width="17" height="17" viewBox="0 0 34 34" ><circle cx="17" cy="17" r="15.700" fill="none" stroke="#00a79d" stroke-width="2"/><g transform="translate(4.600,5.600) scale(1.05)"><path d="M12 3L1 9l4 2.180v6L12 21l7-3.820v-6l2-1.090V17h2V9L12 3zm6.820 6L12 12.720 5.180 9 12 5.280 18.820 9zM17 15.990l-5 2.730-5-2.730v-3.720L12 15l5-2.730v3.720z" fill="#00a79d" stroke="#00a79d" stroke-width="0.450"/></g></svg><svg class="a" style="left:546.5px;top:650.2px" width="21" height="15.5" viewBox="0 0 21 15.5" ><circle cx="10.7" cy="3.7" r="2.75" fill="#000"/><path d="M0.5 14.9 L2.2 10.5 C3.2 7.8 4.6 5.9 6.6 5.6 C8 5.4 8.9 6 9.6 7.1 L12 10.7 L15.3 9 L16.2 10.5 L12.6 14.1 C12 14.6 11.400 14.5 11 14.1 L9.3 12.3 L9.4 14.9 Z" fill="#000"/><ellipse cx="17.5" cy="5.2" rx="2.1" ry="3.1" transform="rotate(22 17.5 5.2)" fill="#fff" stroke="#111" stroke-width="1.1"/><path d="M16.3 8.2 L15.4 10.2" stroke="#111" stroke-width="1.2"/></svg><div class="a badge" style="left:671px;top:648px;width:82.500px;height:23.500px"></div><span class="t" style="left:679.50px;top:656.00px;font-size:11.8px;font-weight:700;color:#fff;font-family:'DejaVu Sans Condensed','DejaVu Sans',sans-serif;letter-spacing:-0.164px;">Approfondi</span><span class="t" style="left:822.50px;top:654.00px;font-size:13.2px;font-weight:400;color:#43516a;letter-spacing:-0.273px;">29/10/2025 à 09:45</span><svg class="a" style="left:996.3px;top:648.2px" width="20" height="20" viewBox="0 0 24 24" ><path d="M12 6c1.11 0 2-.9 2-2 0-.38-.1-.73-.29-1.030L12 0l-1.710 2.970c-.19.3-.29.65-.29 1.030 0 1.1.9 2 2 2zm4.600 9.990l-1.070-1.070-1.080 1.070c-1.300 1.300-3.580 1.310-4.890 0l-1.070-1.070-1.090 1.070C6.750 16.640 5.880 17 4.960 17c-.73 0-1.400-.23-1.960-.61V21c0 .55.45 1 1 1h16c.55 0 1-.45 1-1v-4.610c-.56.38-1.230.61-1.960.61-.92 0-1.790-.36-2.440-1.010zM18 9h-5V7h-2v2H6c-1.660 0-3 1.340-3 3v1.540c0 1.080.88 1.960 1.960 1.960.52 0 1.020-.2 1.380-.57l2.140-2.130 2.130 2.130c.74.74 2.030.74 2.770 0l2.140-2.130 2.130 2.130c.37.37.86.57 1.380.57 1.080 0 1.960-.88 1.960-1.960V12C21 10.340 19.660 9 18 9z" fill="#43516a"/></svg><span class="t" style="left:1024.50px;top:652.00px;font-size:15.4px;font-weight:400;color:#43516a;letter-spacing:0.227px;">01-10-1991</span><span class="t" style="left:1195.00px;top:652.00px;font-size:15.4px;font-weight:400;color:#43516a;letter-spacing:0.305px;">Aurore Hamon</span><span class="t" style="left:1366.25px;top:652.00px;font-size:15.4px;font-weight:400;color:#43516a;letter-spacing:-0.203px;">00:14</span><span class="t" style="left:1457.25px;top:641.00px;font-size:13px;font-weight:400;color:#43516a;">-</span><span class="t" style="left:1457.25px;top:665.00px;font-size:13px;font-weight:400;color:#43516a;">-</span><span class="t" style="left:1638.75px;top:653.00px;font-size:13px;font-weight:400;color:#43516a;">-</span><svg class="a" style="left:1788px;top:660px" width="18" height="6" viewBox="0 0 18 6" ><circle cx="2.9" cy="2.85" r="2.1" fill="#808080"/><circle cx="8.9" cy="2.85" r="2.1" fill="#808080"/><circle cx="14.95" cy="2.85" r="2.1" fill="#808080"/></svg><div class="a hl" style="left:101px;top:698px;width:1788px"></div><span class="t" style="left:117.50px;top:731.00px;font-size:15.4px;font-weight:400;color:#43516a;letter-spacing:-0.102px;">658007</span><span class="t" style="left:328.00px;top:731.00px;font-size:15.4px;font-weight:400;color:#43516a;letter-spacing:-0.102px;">735905</span><svg class="a" style="left:520.7px;top:726.5px" width="17" height="17" viewBox="0 0 34 34" ><circle cx="17" cy="17" r="15.700" fill="none" stroke="#00a79d" stroke-width="2"/><g transform="translate(4.600,5.600) scale(1.05)"><path d="M12 3L1 9l4 2.180v6L12 21l7-3.820v-6l2-1.090V17h2V9L12 3zm6.820 6L12 12.720 5.180 9 12 5.280 18.820 9zM17 15.990l-5 2.730-5-2.730v-3.720L12 15l5-2.730v3.720z" fill="#00a79d" stroke="#00a79d" stroke-width="0.450"/></g></svg><svg class="a" style="left:546.5px;top:729.2px" width="21" height="15.5" viewBox="0 0 21 15.5" ><circle cx="10.7" cy="3.7" r="2.75" fill="#000"/><path d="M0.5 14.9 L2.2 10.5 C3.2 7.8 4.6 5.9 6.6 5.6 C8 5.4 8.9 6 9.6 7.1 L12 10.7 L15.3 9 L16.2 10.5 L12.6 14.1 C12 14.6 11.400 14.5 11 14.1 L9.3 12.3 L9.4 14.9 Z" fill="#000"/><ellipse cx="17.5" cy="5.2" rx="2.1" ry="3.1" transform="rotate(22 17.5 5.2)" fill="#fff" stroke="#111" stroke-width="1.1"/><path d="M16.3 8.2 L15.4 10.2" stroke="#111" stroke-width="1.2"/></svg><div class="a badge" style="left:671px;top:727px;width:82.500px;height:23.500px"></div><span class="t" style="left:679.50px;top:735.00px;font-size:11.8px;font-weight:700;color:#fff;font-family:'DejaVu Sans Condensed','DejaVu Sans',sans-serif;letter-spacing:-0.164px;">Approfondi</span><span class="t" style="left:822.50px;top:733.00px;font-size:13.2px;font-weight:400;color:#43516a;letter-spacing:-0.273px;">28/10/2025 à 09:49</span><svg class="a" style="left:996.3px;top:727.2px" width="20" height="20" viewBox="0 0 24 24" ><path d="M12 6c1.11 0 2-.9 2-2 0-.38-.1-.73-.29-1.030L12 0l-1.710 2.970c-.19.3-.29.65-.29 1.030 0 1.1.9 2 2 2zm4.600 9.990l-1.070-1.070-1.080 1.070c-1.300 1.300-3.580 1.310-4.890 0l-1.070-1.070-1.090 1.070C6.750 16.640 5.880 17 4.960 17c-.73 0-1.400-.23-1.960-.61V21c0 .55.45 1 1 1h16c.55 0 1-.45 1-1v-4.610c-.56.38-1.230.61-1.960.61-.92 0-1.790-.36-2.440-1.010zM18 9h-5V7h-2v2H6c-1.660 0-3 1.340-3 3v1.540c0 1.080.88 1.960 1.960 1.960.52 0 1.020-.2 1.380-.57l2.140-2.130 2.130 2.130c.74.74 2.030.74 2.770 0l2.140-2.130 2.130 2.130c.37.37.86.57 1.380.57 1.080 0 1.960-.88 1.960-1.960V12C21 10.340 19.660 9 18 9z" fill="#43516a"/></svg><span class="t" style="left:1024.50px;top:731.00px;font-size:15.4px;font-weight:400;color:#43516a;letter-spacing:0.227px;">01-10-1991</span><span class="t" style="left:1195.00px;top:731.00px;font-size:15.4px;font-weight:400;color:#43516a;letter-spacing:0.305px;">Aurore Hamon</span><span class="t" style="left:1366.25px;top:731.00px;font-size:15.4px;font-weight:400;color:#43516a;letter-spacing:-0.203px;">01:07</span><span class="t" style="left:1457.25px;top:721.00px;font-size:13px;font-weight:400;color:#43516a;">-</span><span class="t" style="left:1457.25px;top:744.00px;font-size:13px;font-weight:400;color:#43516a;">-</span><span class="t" style="left:1638.75px;top:732.00px;font-size:13px;font-weight:400;color:#43516a;">-</span><svg class="a" style="left:1788px;top:739px" width="18" height="6" viewBox="0 0 18 6" ><circle cx="2.9" cy="2.85" r="2.1" fill="#808080"/><circle cx="8.9" cy="2.85" r="2.1" fill="#808080"/><circle cx="14.95" cy="2.85" r="2.1" fill="#808080"/></svg><div class="a hl" style="left:101px;top:777px;width:1788px"></div><span class="t" style="left:117.50px;top:810.00px;font-size:15.4px;font-weight:400;color:#43516a;letter-spacing:-0.102px;">657964</span><span class="t" style="left:328.00px;top:810.00px;font-size:15.4px;font-weight:400;color:#43516a;letter-spacing:-0.102px;">735850</span><svg class="a" style="left:520.7px;top:805.5px" width="17" height="17" viewBox="0 0 34 34" ><circle cx="17" cy="17" r="15.700" fill="none" stroke="#00a79d" stroke-width="2"/><g transform="translate(4.600,5.600) scale(1.05)"><path d="M12 3L1 9l4 2.180v6L12 21l7-3.820v-6l2-1.090V17h2V9L12 3zm6.820 6L12 12.720 5.180 9 12 5.280 18.820 9zM17 15.990l-5 2.730-5-2.730v-3.720L12 15l5-2.730v3.720z" fill="#00a79d" stroke="#00a79d" stroke-width="0.450"/></g></svg><svg class="a" style="left:546.5px;top:808.2px" width="21" height="15.5" viewBox="0 0 21 15.5" ><circle cx="10.7" cy="3.7" r="2.75" fill="#000"/><path d="M0.5 14.9 L2.2 10.5 C3.2 7.8 4.6 5.9 6.6 5.6 C8 5.4 8.9 6 9.6 7.1 L12 10.7 L15.3 9 L16.2 10.5 L12.6 14.1 C12 14.6 11.400 14.5 11 14.1 L9.3 12.3 L9.4 14.9 Z" fill="#000"/><ellipse cx="17.5" cy="5.2" rx="2.1" ry="3.1" transform="rotate(22 17.5 5.2)" fill="#fff" stroke="#111" stroke-width="1.1"/><path d="M16.3 8.2 L15.4 10.2" stroke="#111" stroke-width="1.2"/></svg><div class="a badge" style="left:671px;top:806px;width:82.500px;height:23.500px"></div><span class="t" style="left:679.50px;top:814.00px;font-size:11.8px;font-weight:700;color:#fff;font-family:'DejaVu Sans Condensed','DejaVu Sans',sans-serif;letter-spacing:-0.164px;">Approfondi</span><span class="t" style="left:822.50px;top:812.00px;font-size:13.2px;font-weight:400;color:#43516a;letter-spacing:-0.273px;">28/10/2025 à 09:19</span><svg class="a" style="left:996.3px;top:806.2px" width="20" height="20" viewBox="0 0 24 24" ><path d="M12 6c1.11 0 2-.9 2-2 0-.38-.1-.73-.29-1.030L12 0l-1.710 2.970c-.19.3-.29.65-.29 1.030 0 1.1.9 2 2 2zm4.600 9.990l-1.070-1.070-1.080 1.070c-1.300 1.300-3.580 1.310-4.890 0l-1.070-1.070-1.090 1.070C6.750 16.640 5.880 17 4.960 17c-.73 0-1.400-.23-1.960-.61V21c0 .55.45 1 1 1h16c.55 0 1-.45 1-1v-4.610c-.56.38-1.230.61-1.960.61-.92 0-1.790-.36-2.440-1.010zM18 9h-5V7h-2v2H6c-1.660 0-3 1.340-3 3v1.540c0 1.080.88 1.960 1.960 1.960.52 0 1.020-.2 1.380-.57l2.140-2.130 2.130 2.130c.74.74 2.030.74 2.770 0l2.140-2.130 2.130 2.130c.37.37.86.57 1.380.57 1.080 0 1.960-.88 1.960-1.960V12C21 10.340 19.660 9 18 9z" fill="#43516a"/></svg><span class="t" style="left:1024.50px;top:810.00px;font-size:15.4px;font-weight:400;color:#43516a;letter-spacing:0.227px;">01-10-1991</span><span class="t" style="left:1195.00px;top:810.00px;font-size:15.4px;font-weight:400;color:#43516a;letter-spacing:0.305px;">Aurore Hamon</span><span class="t" style="left:1366.25px;top:810.00px;font-size:15.4px;font-weight:400;color:#43516a;letter-spacing:-0.203px;">00:17</span><span class="t" style="left:1457.25px;top:799.00px;font-size:13px;font-weight:400;color:#43516a;">-</span><span class="t" style="left:1457.25px;top:823.00px;font-size:13px;font-weight:400;color:#43516a;">-</span><span class="t" style="left:1638.75px;top:811.00px;font-size:13px;font-weight:400;color:#43516a;">-</span><svg class="a" style="left:1788px;top:818px" width="18" height="6" viewBox="0 0 18 6" ><circle cx="2.9" cy="2.85" r="2.1" fill="#808080"/><circle cx="8.9" cy="2.85" r="2.1" fill="#808080"/><circle cx="14.95" cy="2.85" r="2.1" fill="#808080"/></svg><div class="a hl" style="left:101px;top:856px;width:1788px"></div><span class="t" style="left:117.50px;top:889.00px;font-size:15.4px;font-weight:400;color:#43516a;letter-spacing:-0.102px;">652227</span><span class="t" style="left:328.00px;top:889.00px;font-size:15.4px;font-weight:400;color:#43516a;letter-spacing:-0.102px;">727984</span><svg class="a" style="left:520.7px;top:884.5px" width="17" height="17" viewBox="0 0 34 34" ><circle cx="17" cy="17" r="15.700" fill="none" stroke="#00a79d" stroke-width="2"/><g transform="translate(4.600,5.600) scale(1.05)"><path d="M12 3L1 9l4 2.180v6L12 21l7-3.820v-6l2-1.090V17h2V9L12 3zm6.820 6L12 12.720 5.180 9 12 5.280 18.820 9zM17 15.990l-5 2.730-5-2.730v-3.720L12 15l5-2.730v3.720z" fill="#00a79d" stroke="#00a79d" stroke-width="0.450"/></g></svg><svg class="a" style="left:546.5px;top:887.2px" width="21" height="15.5" viewBox="0 0 21 15.5" ><circle cx="10.7" cy="3.7" r="2.75" fill="#000"/><path d="M0.5 14.9 L2.2 10.5 C3.2 7.8 4.6 5.9 6.6 5.6 C8 5.4 8.9 6 9.6 7.1 L12 10.7 L15.3 9 L16.2 10.5 L12.6 14.1 C12 14.6 11.400 14.5 11 14.1 L9.3 12.3 L9.4 14.9 Z" fill="#000"/><ellipse cx="17.5" cy="5.2" rx="2.1" ry="3.1" transform="rotate(22 17.5 5.2)" fill="#fff" stroke="#111" stroke-width="1.1"/><path d="M16.3 8.2 L15.4 10.2" stroke="#111" stroke-width="1.2"/></svg><div class="a badge" style="left:671px;top:885px;width:82.500px;height:23.500px"></div><span class="t" style="left:679.50px;top:893.00px;font-size:11.8px;font-weight:700;color:#fff;font-family:'DejaVu Sans Condensed','DejaVu Sans',sans-serif;letter-spacing:-0.164px;">Approfondi</span><span class="t" style="left:822.50px;top:891.00px;font-size:13.2px;font-weight:400;color:#43516a;letter-spacing:-0.273px;">23/10/2025 à 14:51</span><svg class="a" style="left:996.3px;top:885.2px" width="20" height="20" viewBox="0 0 24 24" ><path d="M12 6c1.11 0 2-.9 2-2 0-.38-.1-.73-.29-1.030L12 0l-1.710 2.970c-.19.3-.29.65-.29 1.030 0 1.1.9 2 2 2zm4.600 9.990l-1.070-1.070-1.080 1.070c-1.300 1.300-3.580 1.310-4.890 0l-1.070-1.070-1.090 1.070C6.750 16.640 5.880 17 4.960 17c-.73 0-1.400-.23-1.960-.61V21c0 .55.45 1 1 1h16c.55 0 1-.45 1-1v-4.610c-.56.38-1.230.61-1.960.61-.92 0-1.790-.36-2.440-1.010zM18 9h-5V7h-2v2H6c-1.660 0-3 1.340-3 3v1.540c0 1.080.88 1.960 1.960 1.960.52 0 1.020-.2 1.380-.57l2.140-2.130 2.130 2.130c.74.74 2.030.74 2.770 0l2.140-2.130 2.130 2.130c.37.37.86.57 1.380.57 1.080 0 1.960-.88 1.960-1.960V12C21 10.340 19.660 9 18 9z" fill="#43516a"/></svg><span class="t" style="left:1024.50px;top:889.00px;font-size:15.4px;font-weight:400;color:#43516a;letter-spacing:0.227px;">01-07-2005</span><span class="t" style="left:1195.00px;top:889.00px;font-size:15.4px;font-weight:400;color:#43516a;letter-spacing:0.161px;">Laurent Greff</span><span class="t" style="left:1366.25px;top:889.00px;font-size:15.4px;font-weight:400;color:#43516a;letter-spacing:-0.203px;">05:41</span><span class="t" style="left:1457.25px;top:879.00px;font-size:13px;font-weight:400;color:#43516a;">-</span><span class="t" style="left:1457.25px;top:902.00px;font-size:13px;font-weight:400;color:#43516a;">-</span><span class="t" style="left:1638.75px;top:890.00px;font-size:13px;font-weight:400;color:#43516a;">-</span><svg class="a" style="left:1788px;top:897px" width="18" height="6" viewBox="0 0 18 6" ><circle cx="2.9" cy="2.85" r="2.1" fill="#808080"/><circle cx="8.9" cy="2.85" r="2.1" fill="#808080"/><circle cx="14.95" cy="2.85" r="2.1" fill="#808080"/></svg><div class="a hl" style="left:101px;top:935px;width:1788px"></div><span class="t" style="left:117.50px;top:968.00px;font-size:15.4px;font-weight:400;color:#43516a;letter-spacing:-0.102px;">639871</span><span class="t" style="left:328.00px;top:968.00px;font-size:15.4px;font-weight:400;color:#43516a;letter-spacing:0.089px;">711942</span><svg class="a" style="left:520.7px;top:963.5px" width="17" height="17" viewBox="0 0 34 34" ><circle cx="17" cy="17" r="15.700" fill="none" stroke="#00a79d" stroke-width="2"/><g transform="translate(4.600,5.600) scale(1.05)"><path d="M12 3L1 9l4 2.180v6L12 21l7-3.820v-6l2-1.090V17h2V9L12 3zm6.820 6L12 12.720 5.180 9 12 5.280 18.820 9zM17 15.990l-5 2.730-5-2.730v-3.720L12 15l5-2.730v3.720z" fill="#00a79d" stroke="#00a79d" stroke-width="0.450"/></g></svg><svg class="a" style="left:546.5px;top:966.2px" width="21" height="15.5" viewBox="0 0 21 15.5" ><circle cx="10.7" cy="3.7" r="2.75" fill="#000"/><path d="M0.5 14.9 L2.2 10.5 C3.2 7.8 4.6 5.9 6.6 5.6 C8 5.4 8.9 6 9.6 7.1 L12 10.7 L15.3 9 L16.2 10.5 L12.6 14.1 C12 14.6 11.400 14.5 11 14.1 L9.3 12.3 L9.4 14.9 Z" fill="#000"/><ellipse cx="17.5" cy="5.2" rx="2.1" ry="3.1" transform="rotate(22 17.5 5.2)" fill="#fff" stroke="#111" stroke-width="1.1"/><path d="M16.3 8.2 L15.4 10.2" stroke="#111" stroke-width="1.2"/></svg><div class="a badge" style="left:671px;top:964px;width:82.500px;height:23.500px"></div><span class="t" style="left:679.50px;top:972.00px;font-size:11.8px;font-weight:700;color:#fff;font-family:'DejaVu Sans Condensed','DejaVu Sans',sans-serif;letter-spacing:-0.164px;">Approfondi</span><span class="t" style="left:822.50px;top:970.00px;font-size:13.2px;font-weight:400;color:#43516a;letter-spacing:-0.273px;">14/10/2025 à 14:45</span><svg class="a" style="left:996.3px;top:964.2px" width="20" height="20" viewBox="0 0 24 24" ><path d="M12 6c1.11 0 2-.9 2-2 0-.38-.1-.73-.29-1.030L12 0l-1.710 2.970c-.19.3-.29.65-.29 1.030 0 1.1.9 2 2 2zm4.600 9.990l-1.070-1.070-1.080 1.070c-1.300 1.300-3.580 1.310-4.890 0l-1.070-1.070-1.090 1.070C6.750 16.640 5.880 17 4.960 17c-.73 0-1.400-.23-1.960-.61V21c0 .55.45 1 1 1h16c.55 0 1-.45 1-1v-4.610c-.56.38-1.230.61-1.960.61-.92 0-1.790-.36-2.440-1.010zM18 9h-5V7h-2v2H6c-1.660 0-3 1.340-3 3v1.540c0 1.080.88 1.960 1.960 1.960.52 0 1.020-.2 1.380-.57l2.140-2.130 2.130 2.130c.74.74 2.030.74 2.770 0l2.140-2.130 2.130 2.130c.37.37.86.57 1.380.57 1.080 0 1.960-.88 1.960-1.960V12C21 10.340 19.660 9 18 9z" fill="#43516a"/></svg><span class="t" style="left:1024.50px;top:968.00px;font-size:15.4px;font-weight:400;color:#43516a;letter-spacing:0.227px;">01-10-1991</span><span class="t" style="left:1195.00px;top:968.00px;font-size:15.4px;font-weight:400;color:#43516a;letter-spacing:0.305px;">Aurore Hamon</span><span class="t" style="left:1366.25px;top:968.00px;font-size:15.4px;font-weight:400;color:#43516a;letter-spacing:-0.203px;">00:42</span><span class="t" style="left:1457.25px;top:957.00px;font-size:13px;font-weight:400;color:#43516a;">-</span><span class="t" style="left:1457.25px;top:981.00px;font-size:13px;font-weight:400;color:#43516a;">-</span><span class="t" style="left:1638.75px;top:969.00px;font-size:13px;font-weight:400;color:#43516a;">-</span><svg class="a" style="left:1788px;top:976px" width="18" height="6" viewBox="0 0 18 6" ><circle cx="2.9" cy="2.85" r="2.1" fill="#808080"/><circle cx="8.9" cy="2.85" r="2.1" fill="#808080"/><circle cx="14.95" cy="2.85" r="2.1" fill="#808080"/></svg><div class="a" style="left:0;top:987px;width:1918px;height:1px;background:#dedede"></div></div></body></html>
